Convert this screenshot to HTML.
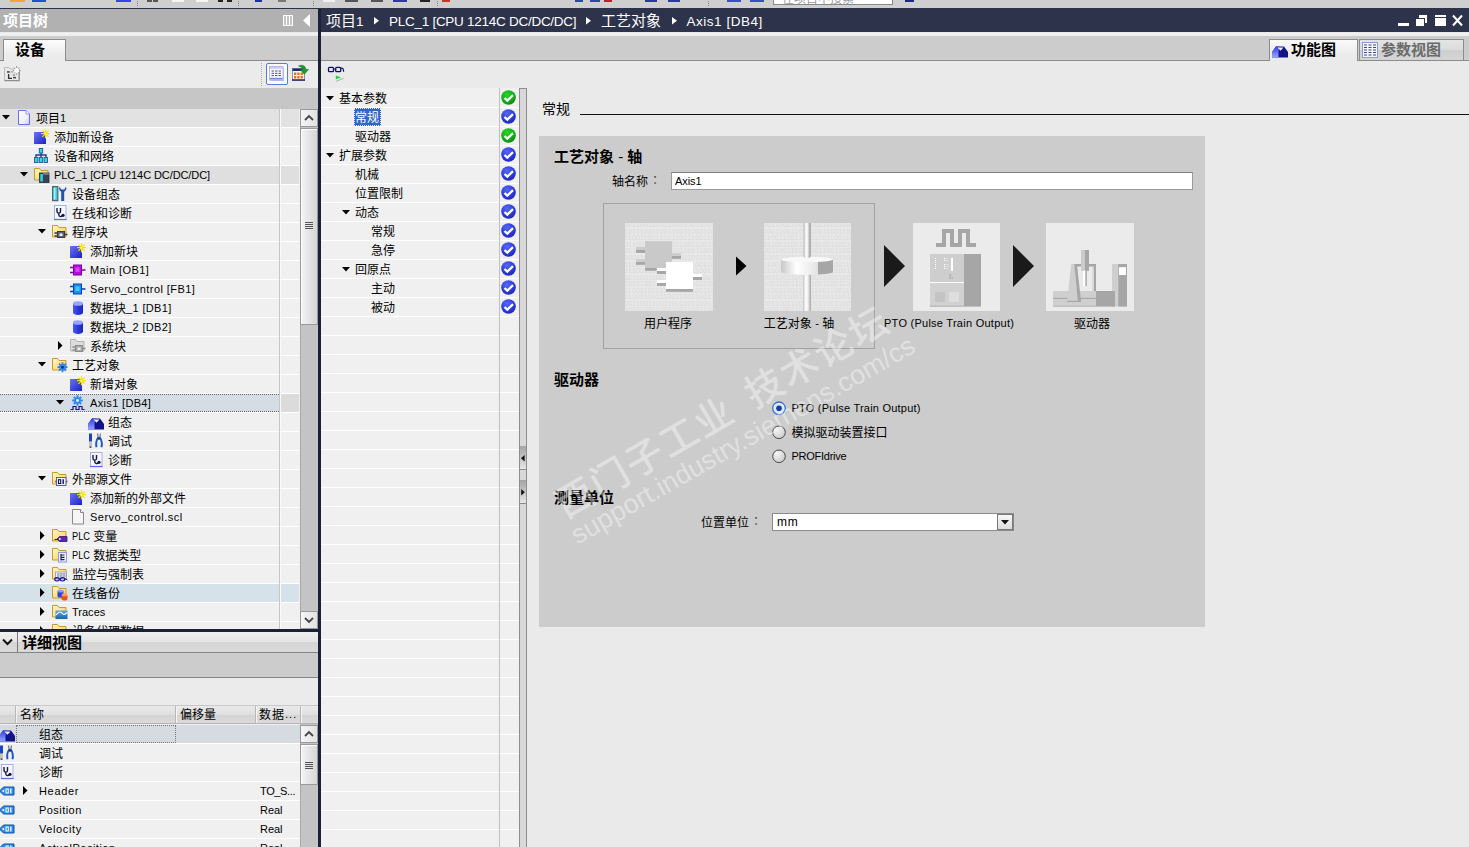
<!DOCTYPE html>
<html lang="zh"><head><meta charset="utf-8"><title>TIA Portal - Axis1</title>
<style>
*{box-sizing:border-box;margin:0;padding:0}
html,body{width:1469px;height:847px;overflow:hidden}
body{position:relative;background:#eaeaea;font-family:"Liberation Sans","Noto Sans CJK SC",sans-serif;font-size:12px;line-height:1;color:#000}
.a{position:absolute}
.t{position:absolute;white-space:nowrap;font-size:12px;line-height:18px;height:18px}
.b{font-weight:bold}
.row{position:absolute;left:0;height:19px;border-bottom:1px solid #fff;background:#f0f0f0}
svg{position:absolute;overflow:visible}
.l{font-size:11px;position:relative;top:-1px}
.tc{position:relative;left:4px;top:-2px;color:#355}
</style></head><body>

<svg width="0" height="0" style="position:absolute"><defs><linearGradient id="gf" x1="0" y1="0" x2="1" y2="1"><stop offset="0" stop-color="#fff6d0"/><stop offset=".55" stop-color="#ffe088"/><stop offset="1" stop-color="#f8c860"/></linearGradient><linearGradient id="gdoc" x1="0" y1="0" x2="1" y2="1"><stop offset="0" stop-color="#ffffff"/><stop offset=".6" stop-color="#f0f0ff"/><stop offset="1" stop-color="#c8ccf8"/></linearGradient><linearGradient id="gblue" x1="0" y1="0" x2="1" y2="1"><stop offset="0" stop-color="#6a74f4"/><stop offset="1" stop-color="#1c20c8"/></linearGradient><linearGradient id="gblue2" x1="0" y1="0" x2="0" y2="1"><stop offset="0" stop-color="#3040e0"/><stop offset="1" stop-color="#98a4ff"/></linearGradient><linearGradient id="gcyl" x1="0" y1="0" x2="1" y2="0"><stop offset="0" stop-color="#4858f4"/><stop offset=".5" stop-color="#2c38e0"/><stop offset="1" stop-color="#1c24b4"/></linearGradient><linearGradient id="gtr" x1="0" y1="0" x2="0" y2="1"><stop offset="0" stop-color="#58a8e8"/><stop offset="1" stop-color="#1c64a8"/></linearGradient><radialGradient id="ggreen" cx=".4" cy=".3" r=".8"><stop offset="0" stop-color="#28d428"/><stop offset=".6" stop-color="#0cac14"/><stop offset="1" stop-color="#0c7c10"/></radialGradient><radialGradient id="gchkb" cx=".4" cy=".3" r=".8"><stop offset="0" stop-color="#5868f8"/><stop offset=".6" stop-color="#2c38dc"/><stop offset="1" stop-color="#1c24a8"/></radialGradient><radialGradient id="grad" cx=".35" cy=".3" r=".9"><stop offset="0" stop-color="#f4f4f4"/><stop offset="1" stop-color="#c4c4c4"/></radialGradient></defs></svg>
<div class="a" style="left:0px;top:0px;width:1469px;height:8px;background:#cfcfcf"></div>
<div class="a" style="left:10px;top:0px;width:15px;height:2px;background:#e8a83a"></div>
<div class="a" style="left:32px;top:0px;width:14px;height:2px;background:#1c55c8"></div>
<div class="a" style="left:116px;top:0px;width:15px;height:2px;background:#3a45e0"></div>
<div class="a" style="left:147px;top:0px;width:5px;height:2px;background:#555"></div>
<div class="a" style="left:153px;top:0px;width:5px;height:2px;background:#555"></div>
<div class="a" style="left:172px;top:0px;width:12px;height:2px;background:#f4f4f4"></div>
<div class="a" style="left:196px;top:0px;width:12px;height:2px;background:#f4f4f4"></div>
<div class="a" style="left:218px;top:0px;width:5px;height:2px;background:#222"></div>
<div class="a" style="left:227px;top:0px;width:5px;height:2px;background:#222"></div>
<div class="a" style="left:255px;top:0px;width:7px;height:2px;background:#1a2fb0"></div>
<div class="a" style="left:278px;top:0px;width:8px;height:2px;background:#777"></div>
<div class="a" style="left:323px;top:0px;width:12px;height:2px;background:#f0f0f0"></div>
<div class="a" style="left:345px;top:0px;width:13px;height:2px;background:#555"></div>
<div class="a" style="left:371px;top:0px;width:12px;height:2px;background:#555"></div>
<div class="a" style="left:393px;top:0px;width:14px;height:2px;background:#2c3c9c"></div>
<div class="a" style="left:420px;top:0px;width:10px;height:2px;background:#222"></div>
<div class="a" style="left:442px;top:0px;width:8px;height:2px;background:#d03020"></div>
<div class="a" style="left:575px;top:0px;width:8px;height:2px;background:#2a4a9a"></div>
<div class="a" style="left:590px;top:0px;width:10px;height:2px;background:#2a4a9a"></div>
<div class="a" style="left:604px;top:0px;width:8px;height:2px;background:#c02020"></div>
<div class="a" style="left:645px;top:0px;width:12px;height:2px;background:#2a3a9a"></div>
<div class="a" style="left:668px;top:0px;width:12px;height:2px;background:#2a3a9a"></div>
<div class="a" style="left:727px;top:0px;width:14px;height:2px;background:#3a50c0"></div>
<div class="a" style="left:750px;top:0px;width:14px;height:2px;background:#3a50c0"></div>
<div class="a" style="left:905px;top:0px;width:9px;height:2px;background:#1a2a80"></div>
<div class="a" style="left:137px;top:1px;width:1px;height:6px;background:repeating-linear-gradient(#888 0 1px,transparent 1px 2px)"></div>
<div class="a" style="left:238px;top:1px;width:1px;height:6px;background:repeating-linear-gradient(#888 0 1px,transparent 1px 2px)"></div>
<div class="a" style="left:313px;top:1px;width:1px;height:6px;background:repeating-linear-gradient(#888 0 1px,transparent 1px 2px)"></div>
<div class="a" style="left:437px;top:1px;width:1px;height:6px;background:repeating-linear-gradient(#888 0 1px,transparent 1px 2px)"></div>
<div class="a" style="left:708px;top:1px;width:1px;height:6px;background:repeating-linear-gradient(#888 0 1px,transparent 1px 2px)"></div>
<div class="a" style="left:773px;top:0;width:120px;height:5px;background:#fff;border:1px solid #888;border-top:none;overflow:hidden"><div class="t" style="left:8px;top:-10px;color:#9a9a9a;font-size:12px">在项目中搜索</div></div>
<div class="a" style="left:0px;top:8px;width:321px;height:1px;background:#2d334b"></div>
<div class="a" style="left:0px;top:9px;width:318px;height:23px;background:#b1b1b1"></div>
<div class="t" style="left:3px;top:11px;font-size:15px;font-weight:bold;color:#fff;line-height:20px;height:20px">项目树</div>
<svg style="left:283px;top:15px" width="10" height="11"><rect x="0.5" y="0.5" width="9" height="10" fill="#c4c4c4" stroke="#fff"/><path d="M3.5 1v9M6.5 1v9" stroke="#fff"/></svg>
<svg style="left:303px;top:14px" width="8" height="13"><polygon points="7,0 7,13 0,6.5" fill="#fff"/></svg>
<div class="a" style="left:0px;top:32px;width:318px;height:4px;background:linear-gradient(#e6e6e6,#f2f2f2 40%,#ececec)"></div>
<div class="a" style="left:0px;top:36px;width:318px;height:25px;background:#cccccc;border-bottom:1px solid #8c8c8c"></div>
<div class="a" style="left:3px;top:39px;width:63px;height:22px;background:linear-gradient(#fdfdfd,#ebebeb 75%);border:1px solid #8c8c8c;border-bottom:none"></div>
<div class="t" style="left:15px;top:40px;font-size:15px;font-weight:bold;line-height:20px;height:20px">设备</div>
<div class="a" style="left:0px;top:61px;width:318px;height:27px;background:#ebebeb"></div>
<svg style="left:4px;top:66px" width="16" height="16" viewBox="0 0 16 16"><path d="M0.500 1.500h4.500l1.500 1.500h8.500v11.500h-14.500z" fill="#e9e9e9" stroke="#bcbcbc" stroke-width="1"/><path d="M0.500 14.700h14.700v-11.200" fill="none" stroke="#8e8e8e" stroke-width="1.200"/><rect x="3" y="5.200" width="2.800" height="1.500" fill="#444"/><rect x="6.800" y="5.400" width="2.200" height="1" fill="#888"/><path d="M4.600 8v4.400h3.400" fill="none" stroke="#333" stroke-width="1.300"/><rect x="9" y="10.900" width="3" height="1.500" fill="#444"/><rect x="8.800" y="8.600" width="2.400" height="1" fill="#777"/><circle cx="12.700" cy="4.600" r="2.600" fill="#fbfbfb"/><path d="M12.700 0v2M12.700 7.200v1.600M8.800 4.600h1.600M15 4.600h1.600M9.800 1.600l1.300 1.300M15.600 1.600l-1.300 1.300M9.900 7.500l1.200-1.200M15.500 7.500l-1.200-1.200" stroke="#7c7c7c" stroke-width=".8"/></svg>
<div class="a" style="left:261px;top:63px;width:1px;height:24px;background:repeating-linear-gradient(#aaa 0 1px,transparent 1px 2px)"></div>
<div class="a" style="left:266px;top:63px;width:22px;height:22px;background:#fbfbfb;border:1px solid #4f7fd8;border-radius:2px"></div>
<svg style="left:269px;top:66px" width="16" height="16" viewBox="0 0 16 16"><rect x="1.500" y="1.500" width="13.500" height="13.500" fill="#b8b8c4"/><rect x="0.500" y="0.500" width="13.500" height="13.500" fill="#fbfbff" stroke="#b4b8ec" stroke-width="1"/><rect x="1" y="1" width="12.500" height="1.800" fill="#c8ccf4"/><path d="M2.500 5h2.500M6 5h2.500M9.500 5h2.500M2.500 7.300h2.500M6 7.300h2.500M9.500 7.300h2.500M2.500 9.600h2.500M6 9.600h2.500M9.500 9.600h2.500" stroke="#4c5064" stroke-width="1"/><rect x="1" y="11.800" width="12.500" height="1.700" fill="#7a88ec"/></svg>
<svg style="left:292px;top:65px" width="16" height="16" viewBox="0 0 16 16"><rect x="0.500" y="3.500" width="12" height="11.500" fill="#fafafa" stroke="#8890b8" stroke-width="1"/><rect x="0.500" y="3.500" width="12" height="2.500" fill="#1c2c6c"/><rect x="0" y="14.300" width="13" height="1.500" fill="#1c2c6c"/><g fill="#e86c10"><rect x="2" y="7.500" width="2.300" height="2.500"/><rect x="5.300" y="7.500" width="2.300" height="2.500"/><rect x="8.600" y="7.500" width="2.300" height="2.500"/><rect x="2" y="11" width="2.300" height="2.500"/><rect x="5.300" y="11" width="2.300" height="2.500"/><rect x="8.600" y="11" width="2.300" height="2.500"/></g><path d="M6.500 1c3.500-1.800 7-.5 7.500 3.500h2.500l-4.200 4.800l-4.200-4.800h2.600c-.3-1.700-1.700-2.700-4.200-3.500z" fill="#1c9c2c" stroke="#0c6c1c" stroke-width=".5"/></svg>
<div class="a" style="left:0px;top:88px;width:318px;height:21px;background:#c6c6c6"></div>
<div class="a" style="left:0;top:109px;width:318px;height:520px;overflow:hidden;background:#f0f0f0">
<div class="row" style="top:0px;width:299px;background:#e2e2e2;"></div>
<svg style="left:2px;top:6px" width="8" height="5"><polygon points="0,0 8,0 4,4.5" fill="#000"/></svg>
<svg style="left:16px;top:1px" width="16" height="16" viewBox="0 0 16 16"><g transform="translate(2 0)"><path d="M0.5 0.5h7.500l3.500 3.500v10.500h-11z" fill="url(#gdoc)" stroke="#6272e4" stroke-width="1"/><path d="M8 0.5v3.500h3.500" fill="#fff" stroke="#8a96ec" stroke-width="1"/></g></svg>
<div class="t" style="left:36px;top:1px;">项目<span class="l">1</span></div>
<div class="row" style="top:19px;width:299px;"></div>
<svg style="left:34px;top:20px" width="16" height="16" viewBox="0 0 16 16"><rect x="0" y="3" width="12" height="12" fill="url(#gblue)"/><g stroke="#f2e000" stroke-width="1.2"><path d="M11.5 0.2v9M7 4.7h9M8.4 1.6l6.200 6.200M14.600 1.600l-6.200 6.200"/></g><circle cx="11.5" cy="4.700" r=".9" fill="#fffbc0"/></svg>
<div class="t" style="left:54px;top:20px;">添加新设备</div>
<div class="row" style="top:38px;width:299px;"></div>
<svg style="left:34px;top:39px" width="16" height="16" viewBox="0 0 16 16"><path d="M7 4v3M2 9V7h10v2M7 7v2" stroke="#223a8c" stroke-width="1.4" fill="none"/><rect x="5.3" y="0.5" width="3.4" height="4.5" fill="#36d6e0" stroke="#1a5a9a" stroke-width=".9"/><rect x="0.5" y="9.5" width="3.4" height="5" fill="#36d6e0" stroke="#1a5a9a" stroke-width=".9"/><rect x="5.3" y="9.5" width="3.4" height="5" fill="#36d6e0" stroke="#1a5a9a" stroke-width=".9"/><rect x="10.1" y="9.5" width="3.4" height="5" fill="#36d6e0" stroke="#1a5a9a" stroke-width=".9"/></svg>
<div class="t" style="left:54px;top:39px;">设备和网络</div>
<div class="row" style="top:57px;width:299px;background:#dfdfdf;"></div>
<svg style="left:20px;top:63px" width="8" height="5"><polygon points="0,0 8,0 4,4.5" fill="#000"/></svg>
<svg style="left:34px;top:58px" width="16" height="16" viewBox="0 0 16 16"><path d="M0.5 1.5h5l1.5 2h7v9.5h-13.5z" fill="url(#gf)" stroke="#c89a2c" stroke-width="1"/><rect x="5.5" y="6" width="9.5" height="9.5" fill="#3a4256" stroke="#272c3c" stroke-width=".8"/><rect x="6.3" y="7" width="2.6" height="7.5" fill="#30d0dc"/><rect x="9.2" y="6.2" width="5.6" height="1.4" fill="#8a92a8"/></svg>
<div class="t" style="left:54px;top:58px;"><span class="l" style="letter-spacing:-0.09px;">PLC_1 [CPU 1214C DC/DC/DC]</span></div>
<div class="row" style="top:76px;width:299px;"></div>
<svg style="left:52px;top:77px" width="16" height="16" viewBox="0 0 16 16"><rect x="0.6" y="0.6" width="5.2" height="14" fill="#30d4dc" stroke="#5a6070" stroke-width="1.2"/><rect x="1.8" y="1.8" width="1.6" height="11.6" fill="#a8f4f6"/><path d="M7.600 0.800c-1 1.800-.4 4 1.600 4.900V15h3V5.700c2-.9 2.800-3.100 1.800-4.900l-1.700 2.700h-3z" fill="#1c54b4"/></svg>
<div class="t" style="left:72px;top:77px;">设备组态</div>
<div class="row" style="top:95px;width:299px;"></div>
<svg style="left:52px;top:96px" width="16" height="16" viewBox="0 0 16 16"><g transform="translate(2 0)"><rect x="0.500" y="0.500" width="11.500" height="14" fill="#f6f7ff" stroke="#a4b0f0" stroke-width="1"/><path d="M0 14.500h12.500" stroke="#5a6ae8" stroke-width="1.200"/><path d="M3 3v3.500c0 2.200 3.500 2.200 3.500 0V3M4.750 8v1.500c0 2.400 2.800 2.600 3.600 1.200" fill="none" stroke="#14183c" stroke-width="1.400"/><circle cx="9" cy="10.300" r="1.600" fill="#14183c"/></g></svg>
<div class="t" style="left:72px;top:96px;">在线和诊断</div>
<div class="row" style="top:114px;width:299px;"></div>
<svg style="left:38px;top:120px" width="8" height="5"><polygon points="0,0 8,0 4,4.5" fill="#000"/></svg>
<svg style="left:52px;top:115px" width="16" height="16" viewBox="0 0 16 16"><path d="M0.5 1.5h5l1.5 2h7v9.5h-13.5z" fill="url(#gf)" stroke="#c89a2c" stroke-width="1"/><rect x="5.500" y="7.500" width="7" height="6" fill="#5a6274" stroke="#343a4c" stroke-width="1"/><rect x="7.500" y="9.500" width="3" height="2.500" fill="#f0f0f0"/><path d="M2.500 9h3M2.500 12h3M12.500 10.500h3" stroke="#343a4c" stroke-width="1.400"/></svg>
<div class="t" style="left:72px;top:115px;">程序块</div>
<div class="row" style="top:133px;width:299px;"></div>
<svg style="left:70px;top:134px" width="16" height="16" viewBox="0 0 16 16"><rect x="0" y="3" width="12" height="12" fill="url(#gblue)"/><g stroke="#f2e000" stroke-width="1.2"><path d="M11.5 0.2v9M7 4.7h9M8.4 1.6l6.200 6.200M14.600 1.600l-6.200 6.200"/></g><circle cx="11.5" cy="4.700" r=".9" fill="#fffbc0"/></svg>
<div class="t" style="left:90px;top:134px;">添加新块</div>
<div class="row" style="top:152px;width:299px;"></div>
<svg style="left:70px;top:153px" width="16" height="16" viewBox="0 0 16 16"><rect x="3.500" y="3" width="8" height="10" fill="#b010d8" stroke="#7a089c" stroke-width="1"/><rect x="5.500" y="5.500" width="4" height="4.500" fill="#e040ff"/><path d="M0 5.500h3.500M0 10.500h3.500M11.500 8h4" stroke="#7a089c" stroke-width="1.600"/></svg>
<div class="t" style="left:90px;top:153px;"><span class="l" style="letter-spacing:0.42px;">Main [OB1]</span></div>
<div class="row" style="top:171px;width:299px;"></div>
<svg style="left:70px;top:172px" width="16" height="16" viewBox="0 0 16 16"><rect x="3.500" y="3" width="8" height="10" fill="#1494ec" stroke="#0c3cb4" stroke-width="1"/><rect x="5.500" y="5.500" width="4" height="4.500" fill="#48c8f8"/><path d="M0 5.500h3.500M0 10.500h3.500M11.500 8h4" stroke="#0c3cb4" stroke-width="1.600"/></svg>
<div class="t" style="left:90px;top:172px;"><span class="l" style="letter-spacing:0.42px;">Servo_control [FB1]</span></div>
<div class="row" style="top:190px;width:299px;"></div>
<svg style="left:70px;top:191px" width="16" height="16" viewBox="0 0 16 16"><path d="M3 3.500v9c0 1.400 2.200 2.500 5 2.500s5-1.100 5-2.500v-9z" fill="url(#gcyl)"/><ellipse cx="8" cy="3.500" rx="5" ry="2.300" fill="#98a4ff"/></svg>
<div class="t" style="left:90px;top:191px;">数据块<span class="l" style="letter-spacing:0.36px;">_1 [DB1]</span></div>
<div class="row" style="top:209px;width:299px;"></div>
<svg style="left:70px;top:210px" width="16" height="16" viewBox="0 0 16 16"><path d="M3 3.500v9c0 1.400 2.200 2.500 5 2.500s5-1.100 5-2.500v-9z" fill="url(#gcyl)"/><ellipse cx="8" cy="3.500" rx="5" ry="2.300" fill="#98a4ff"/></svg>
<div class="t" style="left:90px;top:210px;">数据块<span class="l" style="letter-spacing:0.36px;">_2 [DB2]</span></div>
<div class="row" style="top:228px;width:299px;"></div>
<svg style="left:58px;top:232px" width="5" height="9"><polygon points="0,0 4.5,4.5 0,9" fill="#000"/></svg>
<svg style="left:70px;top:229px" width="16" height="16" viewBox="0 0 16 16"><path d="M0.500 1.500h5l1.500 2h7v9.500h-13.500z" fill="#dcdcdc" stroke="#b4b4b4" stroke-width="1"/><rect x="5.500" y="7.500" width="7" height="6" fill="#a8a8a8" stroke="#8c8c8c" stroke-width="1"/><rect x="7.500" y="9.500" width="3" height="2.500" fill="#f0f0f0"/><path d="M2.500 9h3M2.500 12h3M12.500 10.500h3" stroke="#8c8c8c" stroke-width="1.400"/></svg>
<div class="t" style="left:90px;top:229px;">系统块</div>
<div class="row" style="top:247px;width:299px;"></div>
<svg style="left:38px;top:253px" width="8" height="5"><polygon points="0,0 8,0 4,4.5" fill="#000"/></svg>
<svg style="left:52px;top:248px" width="16" height="16" viewBox="0 0 16 16"><path d="M0.5 1.5h5l1.5 2h7v9.5h-13.5z" fill="url(#gf)" stroke="#c89a2c" stroke-width="1"/><g transform="translate(10.500 10.200)"><g stroke="#2a84f0" stroke-width="1.800"><path d="M0 -5v10M-5 0h10M-3.500 -3.500l7 7M3.500 -3.500l-7 7"/></g><circle r="3.100" fill="#2a84f0"/><circle r="1.300" fill="#14285c"/></g></svg>
<div class="t" style="left:72px;top:248px;">工艺对象</div>
<div class="row" style="top:266px;width:299px;"></div>
<svg style="left:70px;top:267px" width="16" height="16" viewBox="0 0 16 16"><rect x="0" y="3" width="12" height="12" fill="url(#gblue)"/><g stroke="#f2e000" stroke-width="1.2"><path d="M11.5 0.2v9M7 4.7h9M8.4 1.6l6.200 6.200M14.600 1.600l-6.200 6.200"/></g><circle cx="11.5" cy="4.700" r=".9" fill="#fffbc0"/></svg>
<div class="t" style="left:90px;top:267px;">新增对象</div>
<div class="row" style="top:285px;width:299px;background:#dbdbdb;"></div>
<div class="a" style="left:-1px;top:285px;width:282px;height:18px;background:#d5dce3;border:1px dotted #6a6a6a"></div>
<svg style="left:56px;top:291px" width="8" height="5"><polygon points="0,0 8,0 4,4.5" fill="#000"/></svg>
<svg style="left:70px;top:286px" width="16" height="16" viewBox="0 0 16 16"><g transform="translate(7.500 5.500)"><g stroke="#2a8af4" stroke-width="1.900"><path d="M0 -5.300v10.600M-5.300 0h10.600M-3.700 -3.700l7.400 7.400M3.700 -3.700l-7.400 7.400"/></g><circle r="3.300" fill="#2a8af4"/><circle r="1.400" fill="#f0f0f0"/></g><path d="M0.500 14.500h2.500v-3h3v3h3v-3h3v3h2.500" fill="none" stroke="#14148c" stroke-width="1.200"/></svg>
<div class="t" style="left:90px;top:286px;"><span class="l" style="letter-spacing:0.34px;">Axis1 [DB4]</span></div>
<div class="row" style="top:304px;width:299px;"></div>
<svg style="left:88px;top:305px" width="16" height="16" viewBox="0 0 16 16"><path d="M0 15.500V10L4 4.500h8l4 5.500v5.500z" fill="#12128c"/><path d="M0 15.500V10L4 4.500h3.500L6.500 10v5.500z" fill="url(#gblue2)"/><path d="M5.500 5.600h6l-3 3.200z" fill="#eef0ff"/></svg>
<div class="t" style="left:108px;top:305px;">组态</div>
<div class="row" style="top:323px;width:299px;"></div>
<svg style="left:88px;top:324px" width="16" height="16" viewBox="0 0 16 16"><rect x="1" y="0.500" width="3" height="8" fill="#1c44c4"/><rect x="1.800" y="8.500" width="1.400" height="5" fill="#d0d0d8" stroke="#888" stroke-width=".5"/><rect x="1.500" y="13.500" width="2" height="1.300" fill="#333"/><path d="M9.500 0.500l.8 4.500M12.500 0.500l-.8 4.500" stroke="#707a90" stroke-width="1.300"/><path d="M10.200 4.500c-1.800 2.500-2.500 6-1.700 9.700M11.800 4.500c1.800 2.500 2.500 6 1.700 9.700" fill="none" stroke="#1c54d0" stroke-width="1.900"/><circle cx="11" cy="5.500" r="1.200" fill="#14286c"/></svg>
<div class="t" style="left:108px;top:324px;">调试</div>
<div class="row" style="top:342px;width:299px;"></div>
<svg style="left:88px;top:343px" width="16" height="16" viewBox="0 0 16 16"><g transform="translate(2 0)"><rect x="0.500" y="0.500" width="11.500" height="14" fill="#f6f7ff" stroke="#a4b0f0" stroke-width="1"/><path d="M0 14.500h12.500" stroke="#5a6ae8" stroke-width="1.200"/><path d="M3 3v3.500c0 2.200 3.500 2.200 3.500 0V3M4.750 8v1.500c0 2.400 2.800 2.600 3.600 1.200" fill="none" stroke="#14183c" stroke-width="1.400"/><circle cx="9" cy="10.300" r="1.600" fill="#14183c"/></g></svg>
<div class="t" style="left:108px;top:343px;">诊断</div>
<div class="row" style="top:361px;width:299px;"></div>
<svg style="left:38px;top:367px" width="8" height="5"><polygon points="0,0 8,0 4,4.5" fill="#000"/></svg>
<svg style="left:52px;top:362px" width="16" height="16" viewBox="0 0 16 16"><path d="M0.5 1.5h5l1.5 2h7v9.5h-13.5z" fill="url(#gf)" stroke="#c89a2c" stroke-width="1"/><rect x="4.500" y="6.500" width="9.500" height="8" fill="#f0f2ff" stroke="#5a6488" stroke-width="1"/><path d="M3 10.500h1.500M14 10.500h1.500" stroke="#5a6488" stroke-width="1.400"/><rect x="6.500" y="8.700" width="2.200" height="3.800" fill="none" stroke="#14145c" stroke-width="1.100"/><path d="M11.200 8.200v4.800" stroke="#14145c" stroke-width="1.400"/></svg>
<div class="t" style="left:72px;top:362px;">外部源文件</div>
<div class="row" style="top:380px;width:299px;"></div>
<svg style="left:70px;top:381px" width="16" height="16" viewBox="0 0 16 16"><rect x="0" y="3" width="12" height="12" fill="url(#gblue)"/><g stroke="#f2e000" stroke-width="1.2"><path d="M11.5 0.2v9M7 4.7h9M8.4 1.6l6.200 6.200M14.600 1.600l-6.200 6.200"/></g><circle cx="11.5" cy="4.700" r=".9" fill="#fffbc0"/></svg>
<div class="t" style="left:90px;top:381px;">添加新的外部文件</div>
<div class="row" style="top:399px;width:299px;"></div>
<svg style="left:70px;top:400px" width="16" height="16" viewBox="0 0 16 16"><g transform="translate(1 0)"><path d="M1.5 0.5h8l3 3v11.5h-11z" fill="#f6f6f8" stroke="#8a8a8a" stroke-width="1"/><path d="M9.5 0.5v3h3" fill="#fff" stroke="#8a8a8a" stroke-width="1"/></g></svg>
<div class="t" style="left:90px;top:400px;"><span class="l" style="letter-spacing:0.49px;">Servo_control.scl</span></div>
<div class="row" style="top:418px;width:299px;"></div>
<svg style="left:40px;top:422px" width="5" height="9"><polygon points="0,0 4.5,4.5 0,9" fill="#000"/></svg>
<svg style="left:52px;top:419px" width="16" height="16" viewBox="0 0 16 16"><path d="M0.5 1.5h5l1.5 2h7v9.5h-13.5z" fill="url(#gf)" stroke="#c89a2c" stroke-width="1"/><path d="M5 11l2.500-2.500h7.500v5h-7.500z" fill="#5a28b4" stroke="#341474" stroke-width=".8"/><circle cx="7.800" cy="11" r=".9" fill="#fff"/><path d="M2.500 11.500h3" stroke="#341474" stroke-width="1"/></svg>
<div class="t" style="left:72px;top:419px;"><span class="l" style="display:inline-block;transform:scaleX(.84);transform-origin:0 50%;margin-right:-3.4px">PLC</span> 变量</div>
<div class="row" style="top:437px;width:299px;"></div>
<svg style="left:40px;top:441px" width="5" height="9"><polygon points="0,0 4.5,4.5 0,9" fill="#000"/></svg>
<svg style="left:52px;top:438px" width="16" height="16" viewBox="0 0 16 16"><path d="M0.5 1.5h5l1.5 2h7v9.5h-13.5z" fill="url(#gf)" stroke="#c89a2c" stroke-width="1"/><rect x="6.500" y="5.500" width="8" height="9.500" fill="#f2f4ff" stroke="#8a98e8" stroke-width="1"/><path d="M9 7v6.500M9 8h3.500M9 10.300h3.500M9 12.600h3.500" stroke="#1c2048" stroke-width="1.200" fill="none"/></svg>
<div class="t" style="left:72px;top:438px;"><span class="l" style="display:inline-block;transform:scaleX(.84);transform-origin:0 50%;margin-right:-3.4px">PLC</span> 数据类型</div>
<div class="row" style="top:456px;width:299px;"></div>
<svg style="left:40px;top:460px" width="5" height="9"><polygon points="0,0 4.5,4.5 0,9" fill="#000"/></svg>
<svg style="left:52px;top:457px" width="16" height="16" viewBox="0 0 16 16"><path d="M0.5 1.5h5l1.5 2h7v9.5h-13.5z" fill="url(#gf)" stroke="#c89a2c" stroke-width="1"/><rect x="3.500" y="6" width="11" height="6.500" fill="#eef0fa" stroke="#9098b8" stroke-width=".8"/><path d="M5 8h2.500M8 8h2.500M11 8h2.500M5 10h2.500M8 10h2.500M11 10h2.500" stroke="#6a7290" stroke-width="1"/><ellipse cx="5" cy="13.300" rx="2.300" ry="1.700" fill="none" stroke="#14148c" stroke-width="1.100"/><ellipse cx="10.500" cy="13.300" rx="2.300" ry="1.700" fill="none" stroke="#14148c" stroke-width="1.100"/><path d="M7.300 13h1M12.800 12.800l2.500 1" stroke="#14148c" stroke-width="1"/></svg>
<div class="t" style="left:72px;top:457px;">监控与强制表</div>
<div class="row" style="top:475px;width:299px;background:#d5e2ea;"></div>
<svg style="left:40px;top:479px" width="5" height="9"><polygon points="0,0 4.5,4.5 0,9" fill="#000"/></svg>
<svg style="left:52px;top:476px" width="16" height="16" viewBox="0 0 16 16"><path d="M0.5 1.5h5l1.5 2h7v9.5h-13.5z" fill="url(#gf)" stroke="#c89a2c" stroke-width="1"/><path d="M5.500 6v5c0 .9 1.400 1.600 3 1.600s3-.7 3-1.600V6z" fill="#2c3ce0"/><ellipse cx="8.500" cy="6" rx="3" ry="1.500" fill="#8c98ff"/><path d="M9.500 10v4c0 .9 1.300 1.500 3 1.500s3-.6 3-1.500v-4z" fill="#f05010"/><ellipse cx="12.500" cy="10" rx="3" ry="1.400" fill="#ff9c60"/></svg>
<div class="t" style="left:72px;top:476px;">在线备份</div>
<div class="row" style="top:494px;width:299px;"></div>
<svg style="left:40px;top:498px" width="5" height="9"><polygon points="0,0 4.5,4.5 0,9" fill="#000"/></svg>
<svg style="left:52px;top:495px" width="16" height="16" viewBox="0 0 16 16"><path d="M0.5 1.5h5l1.5 2h7v9.5h-13.5z" fill="url(#gf)" stroke="#c89a2c" stroke-width="1"/><rect x="3.500" y="6.500" width="12" height="8.500" fill="url(#gtr)"/><path d="M3.500 11c2-.5 2.500-3 4.500-3s2.500 2.500 4 2.500s2-1.500 3.500-2" fill="none" stroke="#fff" stroke-width="1.200"/></svg>
<div class="t" style="left:72px;top:495px;"><span class="l" style="letter-spacing:0.01px;">Traces</span></div>
<div class="row" style="top:513px;width:299px;"></div>
<svg style="left:40px;top:517px" width="5" height="9"><polygon points="0,0 4.5,4.5 0,9" fill="#000"/></svg>
<svg style="left:52px;top:514px" width="16" height="16" viewBox="0 0 16 16"><path d="M0.5 1.5h5l1.5 2h7v9.5h-13.5z" fill="url(#gf)" stroke="#c89a2c" stroke-width="1"/><rect x="4.500" y="6.500" width="9" height="8" fill="#444c64"/><path d="M6 8.500v4M8.500 8.500v4M11 8.500v4" stroke="#fff" stroke-width="1"/></svg>
<div class="t" style="left:72px;top:514px;">设备代理数据</div>
<div class="a" style="left:279px;top:0px;width:1px;height:520px;background:#c6c6c6"></div>
<div class="a" style="left:280px;top:0px;width:1px;height:520px;background:#fafafa"></div>
<div class="a" style="left:299px;top:0px;width:19px;height:520px;background:#f0f0f0"></div>
<div class="a" style="left:300px;top:0px;width:18px;height:520px;background:#c4c4c4;border-left:1px solid #a8a8a8"></div>
<div class="a" style="left:300px;top:0px;width:18px;height:18px;background:linear-gradient(90deg,#f6f6f6,#e2e2e2);border:1px solid #9a9a9a"></div>
<svg style="left:304px;top:5px" width="10" height="7"><path d="M1 6L5 2L9 6" fill="none" stroke="#444" stroke-width="1.8"/></svg>
<div class="a" style="left:300px;top:19px;width:18px;height:197px;background:linear-gradient(90deg,#f4f4f4,#d6d6d6);border:1px solid #9a9a9a;box-shadow:inset 1px 1px 0 #fff"></div>
<svg style="left:305px;top:113px" width="8" height="8"><path d="M0 0.5h8M0 2.5h8M0 4.5h8M0 6.5h8" stroke="#555"/></svg>
<div class="a" style="left:300px;top:502px;width:18px;height:18px;background:linear-gradient(90deg,#f6f6f6,#e2e2e2);border:1px solid #9a9a9a"></div>
<svg style="left:304px;top:508px" width="10" height="7"><path d="M1 1L5 5L9 1" fill="none" stroke="#444" stroke-width="1.8"/></svg>
</div>
<div class="a" style="left:0px;top:629px;width:318px;height:3px;background:#1b2237"></div>
<div class="a" style="left:0px;top:632px;width:318px;height:21px;background:linear-gradient(#f0f0f0,#e4e4e4 50%,#d6d6d6 52%,#d9d9d9);border-bottom:1px solid #858585"></div>
<svg style="left:2px;top:638px" width="11" height="8"><path d="M1 1.5L5.5 6L10 1.5" fill="none" stroke="#111" stroke-width="2"/></svg>
<div class="a" style="left:17px;top:632px;width:1px;height:20px;background:#7a7a7a"></div>
<div class="t" style="left:22px;top:633px;font-size:15px;font-weight:bold;line-height:20px;height:20px">详细视图</div>
<div class="a" style="left:0px;top:653px;width:318px;height:25px;background:#cccccc;border-bottom:1px solid #858585"></div>
<div class="a" style="left:0px;top:678px;width:318px;height:27px;background:#ebebeb"></div>
<div class="a" style="left:0px;top:705px;width:318px;height:19px;background:linear-gradient(#eaeaea,#e0e0e0 50%,#d4d4d4 52%,#dadada);border-top:1px solid #c8c8c8;border-bottom:1px solid #b4b4b4"></div>
<div class="a" style="left:15px;top:706px;width:1px;height:17px;background:#b8b8b8"></div>
<div class="a" style="left:16px;top:706px;width:1px;height:17px;background:#f4f4f4"></div>
<div class="a" style="left:175px;top:706px;width:1px;height:17px;background:#b8b8b8"></div>
<div class="a" style="left:176px;top:706px;width:1px;height:17px;background:#f4f4f4"></div>
<div class="a" style="left:255px;top:706px;width:1px;height:17px;background:#b8b8b8"></div>
<div class="a" style="left:256px;top:706px;width:1px;height:17px;background:#f4f4f4"></div>
<div class="a" style="left:300px;top:706px;width:1px;height:17px;background:#b8b8b8"></div>
<div class="a" style="left:301px;top:706px;width:1px;height:17px;background:#f4f4f4"></div>
<div class="t" style="left:20px;top:706px;">名称</div>
<div class="t" style="left:180px;top:706px;">偏移量</div>
<div class="t" style="left:259px;top:706px;letter-spacing:1px">数据<span class="l">...</span></div>
<div class="a" style="left:0;top:724px;width:318px;height:123px;overflow:hidden;background:#f0f0f0">
<div class="row" style="top:1px;width:300px;background:#d5dbe1;"></div>
<div class="a" style="left:16px;top:1px;width:160px;height:18px;border:1px dotted #777"></div>
<svg style="left:-1px;top:2px" width="16" height="16" viewBox="0 0 16 16"><path d="M0 15.500V10L4 4.500h8l4 5.500v5.500z" fill="#12128c"/><path d="M0 15.500V10L4 4.500h3.500L6.500 10v5.500z" fill="url(#gblue2)"/><path d="M5.500 5.600h6l-3 3.200z" fill="#eef0ff"/></svg>
<div class="t" style="left:39px;top:2px;">组态</div>
<div class="row" style="top:20px;width:300px;"></div>
<svg style="left:-1px;top:21px" width="16" height="16" viewBox="0 0 16 16"><rect x="1" y="0.500" width="3" height="8" fill="#1c44c4"/><rect x="1.800" y="8.500" width="1.400" height="5" fill="#d0d0d8" stroke="#888" stroke-width=".5"/><rect x="1.500" y="13.500" width="2" height="1.300" fill="#333"/><path d="M9.500 0.500l.8 4.500M12.500 0.500l-.8 4.500" stroke="#707a90" stroke-width="1.300"/><path d="M10.200 4.500c-1.800 2.500-2.500 6-1.700 9.700M11.800 4.500c1.800 2.500 2.500 6 1.700 9.700" fill="none" stroke="#1c54d0" stroke-width="1.900"/><circle cx="11" cy="5.500" r="1.200" fill="#14286c"/></svg>
<div class="t" style="left:39px;top:21px;">调试</div>
<div class="row" style="top:39px;width:300px;"></div>
<svg style="left:-1px;top:40px" width="16" height="16" viewBox="0 0 16 16"><g transform="translate(2 0)"><rect x="0.500" y="0.500" width="11.500" height="14" fill="#f6f7ff" stroke="#a4b0f0" stroke-width="1"/><path d="M0 14.500h12.500" stroke="#5a6ae8" stroke-width="1.200"/><path d="M3 3v3.500c0 2.200 3.500 2.200 3.500 0V3M4.750 8v1.500c0 2.400 2.800 2.600 3.600 1.200" fill="none" stroke="#14183c" stroke-width="1.400"/><circle cx="9" cy="10.300" r="1.600" fill="#14183c"/></g></svg>
<div class="t" style="left:39px;top:40px;">诊断</div>
<div class="row" style="top:58px;width:300px;"></div>
<svg style="left:-1px;top:59px" width="16" height="16" viewBox="0 0 16 16"><path d="M0.500 8l4-4h10.500v8h-10.500z" fill="#2c8ce8" stroke="#1450a8" stroke-width="1"/><circle cx="4.300" cy="8" r="1" fill="#fff"/><rect x="7" y="6" width="2.300" height="4" fill="none" stroke="#fff" stroke-width="1"/><path d="M11.800 5.500v5" stroke="#fff" stroke-width="1.300"/></svg>
<svg style="left:23px;top:62px" width="5" height="9"><polygon points="0,0 4.5,4.5 0,9" fill="#000"/></svg>
<div class="t" style="left:39px;top:59px;"><span class="l" style="letter-spacing:0.66px;">Header</span></div>
<div class="t" style="left:260px;top:59px;"><span class="l" style="letter-spacing:-0.37px;">TO_S...</span></div>
<div class="row" style="top:77px;width:300px;"></div>
<svg style="left:-1px;top:78px" width="16" height="16" viewBox="0 0 16 16"><path d="M0.500 8l4-4h10.500v8h-10.500z" fill="#2c8ce8" stroke="#1450a8" stroke-width="1"/><circle cx="4.300" cy="8" r="1" fill="#fff"/><rect x="7" y="6" width="2.300" height="4" fill="none" stroke="#fff" stroke-width="1"/><path d="M11.800 5.500v5" stroke="#fff" stroke-width="1.300"/></svg>
<div class="t" style="left:39px;top:78px;"><span class="l" style="letter-spacing:0.45px;">Position</span></div>
<div class="t" style="left:260px;top:78px;"><span class="l" style="letter-spacing:-0.06px;">Real</span></div>
<div class="row" style="top:96px;width:300px;"></div>
<svg style="left:-1px;top:97px" width="16" height="16" viewBox="0 0 16 16"><path d="M0.500 8l4-4h10.500v8h-10.500z" fill="#2c8ce8" stroke="#1450a8" stroke-width="1"/><circle cx="4.300" cy="8" r="1" fill="#fff"/><rect x="7" y="6" width="2.300" height="4" fill="none" stroke="#fff" stroke-width="1"/><path d="M11.800 5.500v5" stroke="#fff" stroke-width="1.300"/></svg>
<div class="t" style="left:39px;top:97px;"><span class="l" style="letter-spacing:0.61px;">Velocity</span></div>
<div class="t" style="left:260px;top:97px;"><span class="l" style="letter-spacing:-0.06px;">Real</span></div>
<div class="row" style="top:115px;width:300px;"></div>
<svg style="left:-1px;top:116px" width="16" height="16" viewBox="0 0 16 16"><path d="M0.500 8l4-4h10.500v8h-10.500z" fill="#2c8ce8" stroke="#1450a8" stroke-width="1"/><circle cx="4.300" cy="8" r="1" fill="#fff"/><rect x="7" y="6" width="2.300" height="4" fill="none" stroke="#fff" stroke-width="1"/><path d="M11.800 5.500v5" stroke="#fff" stroke-width="1.300"/></svg>
<div class="t" style="left:39px;top:116px;"><span class="l" style="letter-spacing:0.49px;">ActualPosition</span></div>
<div class="t" style="left:260px;top:116px;"><span class="l" style="letter-spacing:-0.06px;">Real</span></div>
<div class="a" style="left:300px;top:0px;width:18px;height:123px;background:#c4c4c4;border-left:1px solid #a8a8a8"></div>
<div class="a" style="left:300px;top:1px;width:18px;height:18px;background:linear-gradient(90deg,#f6f6f6,#e2e2e2);border:1px solid #9a9a9a"></div>
<svg style="left:304px;top:6px" width="10" height="7"><path d="M1 6L5 2L9 6" fill="none" stroke="#444" stroke-width="1.8"/></svg>
<div class="a" style="left:300px;top:20px;width:18px;height:41px;background:linear-gradient(90deg,#f4f4f4,#d6d6d6);border:1px solid #9a9a9a;box-shadow:inset 1px 1px 0 #fff"></div>
<svg style="left:305px;top:38px" width="8" height="8"><path d="M0 0.5h8M0 2.5h8M0 4.5h8M0 6.5h8" stroke="#555"/></svg>
</div>
<div class="a" style="left:318px;top:9px;width:3px;height:838px;background:#1b2237"></div>
<div class="a" style="left:321px;top:8px;width:1148px;height:24px;background:#2d334b"></div>
<div class="t" style="left:326px;top:11px;font-size:15px;line-height:20px;height:20px;color:#fff">项目<span class="l" style="font-size:13.5px;top:0px;">1</span></div>
<div class="t" style="left:389px;top:11px;font-size:15px;line-height:20px;height:20px;color:#fff"><span class="l" style="letter-spacing:-0.27px;font-size:13.5px;top:0px;">PLC_1 [CPU 1214C DC/DC/DC]</span></div>
<div class="t" style="left:601px;top:11px;font-size:15px;line-height:20px;height:20px;color:#fff">工艺对象</div>
<div class="t" style="left:686.5px;top:11px;font-size:15px;line-height:20px;height:20px;color:#fff"><span class="l" style="letter-spacing:0.52px;font-size:13.5px;top:0px;">Axis1 [DB4]</span></div>
<svg style="left:374px;top:17px" width="5" height="8"><polygon points="0,0 5,3.800 0,7.600" fill="#fff"/></svg>
<svg style="left:586px;top:17px" width="5" height="8"><polygon points="0,0 5,3.800 0,7.600" fill="#fff"/></svg>
<svg style="left:672px;top:17px" width="5" height="8"><polygon points="0,0 5,3.800 0,7.600" fill="#fff"/></svg>
<div class="a" style="left:1398px;top:23px;width:11px;height:3px;background:#fff"></div>
<svg style="left:1416px;top:15px" width="11" height="11"><path d="M3 0h8v8h-2v-5h-6z" fill="#fff"/><rect x="0" y="4" width="8" height="7" fill="#fff"/></svg>
<svg style="left:1435px;top:15px" width="11" height="11"><rect x="0" y="0" width="11" height="2" fill="#fff"/><rect x="0" y="3" width="11" height="8" fill="#fff"/></svg>
<svg style="left:1452px;top:15px" width="11" height="11"><path d="M1 0.5L10 10.5M10 0.5L1 10.5" stroke="#fff" stroke-width="2"/></svg>
<div class="a" style="left:321px;top:32px;width:1148px;height:4px;background:linear-gradient(#e6e6e6,#f2f2f2 40%,#ececec)"></div>
<div class="a" style="left:321px;top:36px;width:1148px;height:25px;background:#cccccc;border-bottom:1px solid #8c8c8c"></div>
<div class="a" style="left:1269px;top:39px;width:89px;height:22px;background:linear-gradient(#fafafa,#ebebeb 70%);border:1px solid #8c8c8c;border-bottom:none"></div>
<svg style="left:1272px;top:42px" width="16" height="16" viewBox="0 0 16 16"><path d="M0 15.500V10L4 4.500h8l4 5.500v5.500z" fill="#12128c"/><path d="M0 15.500V10L4 4.500h3.500L6.500 10v5.500z" fill="url(#gblue2)"/><path d="M5.500 5.600h6l-3 3.200z" fill="#eef0ff"/></svg>
<div class="t" style="left:1291px;top:40px;font-size:15px;font-weight:bold;line-height:20px;height:20px">功能图</div>
<div class="a" style="left:1359px;top:39px;width:105px;height:21px;background:linear-gradient(#e4e4e4,#dcdcdc 50%,#cfcfcf 52%,#d4d4d4);border:1px solid #8c8c8c;border-bottom:none"></div>
<svg style="left:1362px;top:42px" width="16" height="16" viewBox="0 0 16 16"><rect x="0.500" y="0.500" width="15" height="15" fill="#f4f6ff" stroke="#8a98e8" stroke-width="1"/><path d="M2 3h3M6.500 3h3M11 3h3M2 5.500h3M6.500 5.500h3M11 5.500h3M2 8h3M6.500 8h3M11 8h3M2 10.500h3M6.500 10.500h3M11 10.500h3M2 13h3M6.500 13h3M11 13h3" stroke="#444a70" stroke-width="1.100"/></svg>
<div class="t" style="left:1381px;top:40px;font-size:15px;font-weight:bold;line-height:20px;height:20px;color:#6a6a6a">参数视图</div>
<div class="a" style="left:321px;top:61px;width:1148px;height:786px;background:#eaeaea"></div>
<svg style="left:327px;top:65px" width="16" height="16" viewBox="0 0 16 16"><rect x="1.500" y="2.400" width="5" height="4.200" rx=".9" fill="#e4e4e4" stroke="#10106c" stroke-width="1.300"/><rect x="8.700" y="2.400" width="5" height="4.200" rx=".9" fill="#e4e4e4" stroke="#10106c" stroke-width="1.300"/><path d="M6.500 4h2.200M13.700 3.200c2-.6 2.900 .6 2.900 3.600" fill="none" stroke="#10106c" stroke-width="1.200"/><path d="M8.800 10.600l5.400 1.900l-5.400 1.800z" fill="#20d040"/><path d="M9.200 16.300l7.300-3" stroke="#a0a4b4" stroke-width=".9"/></svg>
<div class="a" style="left:321px;top:88px;width:198px;height:759px;overflow:hidden;background:#f0f0f0">
<div class="row" style="top:1px;width:198px"></div>
<div class="row" style="top:20px;width:198px"></div>
<div class="row" style="top:39px;width:198px"></div>
<div class="row" style="top:58px;width:198px"></div>
<div class="row" style="top:77px;width:198px"></div>
<div class="row" style="top:96px;width:198px"></div>
<div class="row" style="top:115px;width:198px"></div>
<div class="row" style="top:134px;width:198px"></div>
<div class="row" style="top:153px;width:198px"></div>
<div class="row" style="top:172px;width:198px"></div>
<div class="row" style="top:191px;width:198px"></div>
<div class="row" style="top:210px;width:198px"></div>
<div class="row" style="top:229px;width:198px"></div>
<div class="row" style="top:248px;width:198px"></div>
<div class="row" style="top:267px;width:198px"></div>
<div class="row" style="top:286px;width:198px"></div>
<div class="row" style="top:305px;width:198px"></div>
<div class="row" style="top:324px;width:198px"></div>
<div class="row" style="top:343px;width:198px"></div>
<div class="row" style="top:362px;width:198px"></div>
<div class="row" style="top:381px;width:198px"></div>
<div class="row" style="top:400px;width:198px"></div>
<div class="row" style="top:419px;width:198px"></div>
<div class="row" style="top:438px;width:198px"></div>
<div class="row" style="top:457px;width:198px"></div>
<div class="row" style="top:476px;width:198px"></div>
<div class="row" style="top:495px;width:198px"></div>
<div class="row" style="top:514px;width:198px"></div>
<div class="row" style="top:533px;width:198px"></div>
<div class="row" style="top:552px;width:198px"></div>
<div class="row" style="top:571px;width:198px"></div>
<div class="row" style="top:590px;width:198px"></div>
<div class="row" style="top:609px;width:198px"></div>
<div class="row" style="top:628px;width:198px"></div>
<div class="row" style="top:647px;width:198px"></div>
<div class="row" style="top:666px;width:198px"></div>
<div class="row" style="top:685px;width:198px"></div>
<div class="row" style="top:704px;width:198px"></div>
<div class="row" style="top:723px;width:198px"></div>
<div class="row" style="top:742px;width:198px"></div>
<div class="a" style="left:178px;top:0px;width:1px;height:759px;background:#c0c0c0"></div>
<svg style="left:5px;top:8px" width="8" height="5"><polygon points="0,0 8,0 4,4.5" fill="#000"/></svg>
<div class="t" style="left:18px;top:2px;">基本参数</div>
<svg style="left:180px;top:2px" width="16" height="16" viewBox="0 0 16 16"><circle cx="7.500" cy="7.500" r="7.300" fill="url(#ggreen)"/><path d="M3.500 8l2.800 2.700l5.700-5.500" fill="none" stroke="#fff" stroke-width="2.300"/></svg>
<div class="a" style="left:33px;top:20px;width:27px;height:18px;background:#3165c8;border:1px dotted #dfe8ff"></div>
<div class="t" style="left:34px;top:21px;color:#fff">常规</div>
<svg style="left:180px;top:21px" width="16" height="16" viewBox="0 0 16 16"><circle cx="7.500" cy="7.500" r="7.300" fill="url(#gchkb)"/><path d="M3.500 8l2.800 2.700l5.700-5.500" fill="none" stroke="#fff" stroke-width="2.300"/></svg>
<div class="t" style="left:34px;top:40px;">驱动器</div>
<svg style="left:180px;top:40px" width="16" height="16" viewBox="0 0 16 16"><circle cx="7.500" cy="7.500" r="7.300" fill="url(#ggreen)"/><path d="M3.500 8l2.800 2.700l5.700-5.500" fill="none" stroke="#fff" stroke-width="2.300"/></svg>
<svg style="left:5px;top:65px" width="8" height="5"><polygon points="0,0 8,0 4,4.5" fill="#000"/></svg>
<div class="t" style="left:18px;top:59px;">扩展参数</div>
<svg style="left:180px;top:59px" width="16" height="16" viewBox="0 0 16 16"><circle cx="7.500" cy="7.500" r="7.300" fill="url(#gchkb)"/><path d="M3.500 8l2.800 2.700l5.700-5.500" fill="none" stroke="#fff" stroke-width="2.300"/></svg>
<div class="t" style="left:34px;top:78px;">机械</div>
<svg style="left:180px;top:78px" width="16" height="16" viewBox="0 0 16 16"><circle cx="7.500" cy="7.500" r="7.300" fill="url(#gchkb)"/><path d="M3.500 8l2.800 2.700l5.700-5.500" fill="none" stroke="#fff" stroke-width="2.300"/></svg>
<div class="t" style="left:34px;top:97px;">位置限制</div>
<svg style="left:180px;top:97px" width="16" height="16" viewBox="0 0 16 16"><circle cx="7.500" cy="7.500" r="7.300" fill="url(#gchkb)"/><path d="M3.500 8l2.800 2.700l5.700-5.500" fill="none" stroke="#fff" stroke-width="2.300"/></svg>
<svg style="left:21px;top:122px" width="8" height="5"><polygon points="0,0 8,0 4,4.5" fill="#000"/></svg>
<div class="t" style="left:34px;top:116px;">动态</div>
<svg style="left:180px;top:116px" width="16" height="16" viewBox="0 0 16 16"><circle cx="7.500" cy="7.500" r="7.300" fill="url(#gchkb)"/><path d="M3.500 8l2.800 2.700l5.700-5.500" fill="none" stroke="#fff" stroke-width="2.300"/></svg>
<div class="t" style="left:50px;top:135px;">常规</div>
<svg style="left:180px;top:135px" width="16" height="16" viewBox="0 0 16 16"><circle cx="7.500" cy="7.500" r="7.300" fill="url(#gchkb)"/><path d="M3.500 8l2.800 2.700l5.700-5.500" fill="none" stroke="#fff" stroke-width="2.300"/></svg>
<div class="t" style="left:50px;top:154px;">急停</div>
<svg style="left:180px;top:154px" width="16" height="16" viewBox="0 0 16 16"><circle cx="7.500" cy="7.500" r="7.300" fill="url(#gchkb)"/><path d="M3.500 8l2.800 2.700l5.700-5.500" fill="none" stroke="#fff" stroke-width="2.300"/></svg>
<svg style="left:21px;top:179px" width="8" height="5"><polygon points="0,0 8,0 4,4.5" fill="#000"/></svg>
<div class="t" style="left:34px;top:173px;">回原点</div>
<svg style="left:180px;top:173px" width="16" height="16" viewBox="0 0 16 16"><circle cx="7.500" cy="7.500" r="7.300" fill="url(#gchkb)"/><path d="M3.500 8l2.800 2.700l5.700-5.500" fill="none" stroke="#fff" stroke-width="2.300"/></svg>
<div class="t" style="left:50px;top:192px;">主动</div>
<svg style="left:180px;top:192px" width="16" height="16" viewBox="0 0 16 16"><circle cx="7.500" cy="7.500" r="7.300" fill="url(#gchkb)"/><path d="M3.500 8l2.800 2.700l5.700-5.500" fill="none" stroke="#fff" stroke-width="2.300"/></svg>
<div class="t" style="left:50px;top:211px;">被动</div>
<svg style="left:180px;top:211px" width="16" height="16" viewBox="0 0 16 16"><circle cx="7.500" cy="7.500" r="7.300" fill="url(#gchkb)"/><path d="M3.500 8l2.800 2.700l5.700-5.500" fill="none" stroke="#fff" stroke-width="2.300"/></svg>
</div>
<div class="a" style="left:519px;top:88px;width:8px;height:759px;background:#d9d9d9;border:1px solid #8e8e8e;border-bottom:none"></div>
<div class="a" style="left:520px;top:446px;width:6px;height:24px;background:linear-gradient(#a4a4a4,#e6e6e6);border-bottom:1px solid #8a8a8a"></div>
<div class="a" style="left:520px;top:480px;width:6px;height:24px;background:linear-gradient(#a4a4a4,#e6e6e6);border-bottom:1px solid #8a8a8a"></div>
<svg style="left:521px;top:455px" width="4" height="7"><polygon points="3.6,0 3.6,6.500 0,3.250" fill="#111"/></svg>
<svg style="left:521px;top:489px" width="4" height="7"><polygon points="0.2,0 0.2,6.500 3.800,3.250" fill="#111"/></svg>
<div class="t" style="left:542px;top:99px;font-size:14px;line-height:20px;height:20px">常规</div>
<div class="a" style="left:580px;top:114px;width:889px;height:1px;background:#111"></div>
<div class="a" style="left:539px;top:136px;width:666px;height:491px;background:#cccccc"></div>
<div class="t" style="left:554px;top:147px;font-size:15px;font-weight:bold;line-height:20px;height:20px">工艺对象 <span style="font-weight:normal">-</span> 轴</div>
<div class="t" style="left:612px;top:173px;">轴名称<span class="tc">：</span></div>
<div class="a" style="left:671px;top:172px;width:522px;height:18px;background:#fff;border:1px solid #9a9a9a;border-top-color:#7c7c7c"></div>
<div class="t" style="left:675px;top:173px;"><span class="l" style="letter-spacing:-0.07px;">Axis1</span></div>
<div class="a" style="left:603px;top:203px;width:272px;height:146px;border:1px solid #a2a2a2"></div>
<svg style="left:600px;top:200px" width="560" height="150" viewBox="600 200 560 150">
<defs><clipPath id="c1"><rect x="625" y="223" width="88" height="88"/></clipPath><clipPath id="c2"><rect x="764" y="223" width="87" height="88"/></clipPath><linearGradient id="shaft" x1="0" y1="0" x2="1" y2="0"><stop offset="0" stop-color="#c4c4c4"/><stop offset=".35" stop-color="#ffffff"/><stop offset=".6" stop-color="#f0f0f0"/><stop offset="1" stop-color="#a4a4a4"/></linearGradient><linearGradient id="disc" x1="0" y1="0" x2="1" y2="0"><stop offset="0" stop-color="#c8c8c8"/><stop offset=".3" stop-color="#ffffff"/><stop offset=".7" stop-color="#e4e4e4"/><stop offset=".72" stop-color="#a6a6a6"/><stop offset="1" stop-color="#a6a6a6"/></linearGradient></defs>
<rect x="625" y="223" width="88" height="88" fill="#e8e8e8"/>
<g clip-path="url(#c1)"><g font-family="Liberation Sans, sans-serif" font-size="7.3" letter-spacing="0.03" fill="#dbdbdb"><text x="624" y="227.2">00110011001100110011001</text><text x="624" y="233.8">10011001100110011001100</text><text x="624" y="240.3">11001100110011001100110</text><text x="624" y="246.8">01100110011001100110011</text><text x="624" y="253.4">00110011001100110011001</text><text x="624" y="259.9">10011001100110011001100</text><text x="624" y="266.5">11001100110011001100110</text><text x="624" y="273.1">01100110011001100110011</text><text x="624" y="279.6">00110011001100110011001</text><text x="624" y="286.1">10011001100110011001100</text><text x="624" y="292.7">11001100110011001100110</text><text x="624" y="299.2">01100110011001100110011</text><text x="624" y="305.8">00110011001100110011001</text><text x="624" y="312.3">10011001100110011001100</text><text x="624" y="318.9">11001100110011001100110</text></g></g>
<rect x="645" y="241.200" width="27" height="26.800" fill="#c9c9c9"/>
<rect x="645" y="268" width="11.700" height="2.800" fill="#a6a6a6"/>
<rect x="636" y="247" width="9" height="2.800" fill="#cdcdcd"/><rect x="636" y="249.800" width="9" height="3.100" fill="#a6a6a6"/>
<rect x="636" y="259.200" width="9" height="2.800" fill="#cdcdcd"/><rect x="636" y="262" width="9" height="2.800" fill="#a6a6a6"/>
<rect x="672" y="253.100" width="9" height="2.900" fill="#cdcdcd"/><rect x="672" y="256" width="9" height="2.800" fill="#a6a6a6"/>
<rect x="666" y="262" width="27" height="27" fill="#ffffff"/>
<rect x="666" y="289" width="27" height="2.800" fill="#a6a6a6"/>
<rect x="657" y="268.200" width="9" height="2.800" fill="#fff"/><rect x="657" y="271" width="9" height="3" fill="#a6a6a6"/>
<rect x="657" y="280" width="9" height="3" fill="#fff"/><rect x="657" y="283" width="9" height="2.900" fill="#a6a6a6"/>
<rect x="693" y="274" width="9" height="3" fill="#fff"/><rect x="693" y="277" width="9" height="3" fill="#a6a6a6"/>
<polygon points="736,256.5 746.5,266 736,275.5" fill="#000"/>
<rect x="764" y="223" width="87" height="88" fill="#e8e8e8"/>
<g clip-path="url(#c2)"><g font-family="Liberation Sans, sans-serif" font-size="7.3" letter-spacing="0.03" fill="#dbdbdb"><text x="763" y="227.2">00110011001100110011001</text><text x="763" y="233.8">10011001100110011001100</text><text x="763" y="240.3">11001100110011001100110</text><text x="763" y="246.8">01100110011001100110011</text><text x="763" y="253.4">00110011001100110011001</text><text x="763" y="259.9">10011001100110011001100</text><text x="763" y="266.5">11001100110011001100110</text><text x="763" y="273.1">01100110011001100110011</text><text x="763" y="279.6">00110011001100110011001</text><text x="763" y="286.1">10011001100110011001100</text><text x="763" y="292.7">11001100110011001100110</text><text x="763" y="299.2">01100110011001100110011</text><text x="763" y="305.8">00110011001100110011001</text><text x="763" y="312.3">10011001100110011001100</text><text x="763" y="318.9">11001100110011001100110</text></g></g>
<rect x="803" y="223" width="8" height="88" fill="url(#shaft)"/>
<path d="M781 259.500v12.500a26 2.800 0 0 0 52 0v-12.500z" fill="url(#disc)"/>
<ellipse cx="807" cy="259.500" rx="26" ry="2.800" fill="#f8f8f8"/>
<rect x="804" y="223" width="6" height="35" fill="url(#shaft)"/>
<polygon points="884,245 905,266 884,287" fill="#1a1a1a"/>
<rect x="913" y="223" width="87" height="88" fill="#ebebeb"/>
<path d="M936 245h8v-14h8v14h8v-14h8v14h8" fill="none" stroke="#a6a6a6" stroke-width="4"/>
<rect x="930" y="254" width="34" height="52.600" fill="#cecece"/>
<rect x="964" y="254" width="17" height="52.600" fill="#a6a6a6"/>
<rect x="930" y="282" width="34" height="1.300" fill="#fafafa"/>
<rect x="930" y="283.300" width="34" height="23.300" fill="#d1d1d1"/>
<rect x="930" y="305.600" width="34" height="1" fill="#b4b4b4"/>
<rect x="935" y="292" width="10" height="10" fill="#c4c4c4"/><rect x="949" y="292" width="10" height="10" fill="#dedede"/>
<rect x="935" y="258" width="1" height="1" fill="#fff"/>
<rect x="935" y="260" width="1" height="1" fill="#fff"/>
<rect x="935" y="262" width="1" height="1" fill="#fff"/>
<rect x="935" y="264" width="1" height="1" fill="#fff"/>
<rect x="935" y="266" width="1" height="1" fill="#fff"/>
<rect x="935" y="268" width="1" height="1" fill="#fff"/>
<rect x="944" y="258" width="1" height="1" fill="#fff"/><rect x="945" y="258" width="4" height="1" fill="#dcdcdc"/>
<rect x="944" y="260" width="1" height="1" fill="#fff"/><rect x="945" y="260" width="4" height="1" fill="#dcdcdc"/>
<rect x="944" y="264" width="1" height="1" fill="#fff"/><rect x="945" y="264" width="4" height="1" fill="#dcdcdc"/>
<rect x="944" y="266" width="1" height="1" fill="#fff"/><rect x="945" y="266" width="4" height="1" fill="#dcdcdc"/>
<rect x="944" y="268" width="1" height="1" fill="#fff"/><rect x="945" y="268" width="4" height="1" fill="#dcdcdc"/>
<rect x="951" y="258" width="2" height="13" fill="#fff"/>
<rect x="949.200" y="274" width="2" height="5" fill="#b6b6b6"/><rect x="952" y="277" width="1" height="2" fill="#b6b6b6"/>
<polygon points="1013,245 1034,266 1013,287" fill="#1a1a1a"/>
<rect x="1046" y="223" width="88" height="88" fill="#ebebeb"/>
<rect x="1053" y="291" width="43" height="15.600" fill="#cfcfcf"/>
<rect x="1053" y="297.800" width="43" height="1.200" fill="#a9a9a9"/>
<rect x="1053" y="305.800" width="43" height=".8" fill="#b4b4b4"/>
<rect x="1112" y="264" width="6.200" height="42.600" fill="#cfcfcf"/>
<rect x="1096" y="291" width="19" height="15.600" fill="#a6a6a6"/>
<rect x="1118.200" y="264" width="8.800" height="42.600" fill="#a6a6a6"/>
<rect x="1119" y="267.200" width="7" height="7.800" fill="#ffffff"/>
<rect x="1092.200" y="266" width="2" height="25" fill="#d6d6d6"/>
<polygon points="1071.200,264 1074.500,264 1078,301 1067.200,301" fill="#cfcfcf"/>
<polygon points="1074.300,264 1096,264 1096,291 1094,291 1094,266.600 1077.200,266.600 1081,300.700 1081,302 1067.200,302 1067.200,300.700 1077.800,300.700" fill="#a6a6a6"/>
<rect x="1081" y="250" width="4" height="20.800" fill="#cbcbcb"/><rect x="1085" y="250" width="4" height="20.800" fill="#a6a6a6"/>
<rect x="1083" y="270.800" width="2.400" height="15.200" fill="#ffffff"/><rect x="1085.400" y="270.800" width="1.400" height="15.200" fill="#a6a6a6"/>
</svg>
<div class="t" style="left:668px;top:315px;transform:translateX(-50%)">用户程序</div>
<div class="t" style="left:799px;top:315px;transform:translateX(-50%)">工艺对象 <span class="l">-</span> 轴</div>
<div class="t" style="left:884px;top:315px;"><span class="l" style="letter-spacing:0.26px;">PTO (Pulse Train Output)</span></div>
<div class="t" style="left:1092px;top:315px;transform:translateX(-50%)">驱动器</div>
<div class="t" style="left:554px;top:370px;font-size:15px;font-weight:bold;line-height:20px;height:20px">驱动器</div>
<svg style="left:772px;top:401px" width="14" height="14"><circle cx="7" cy="7.3" r="6.3" fill="#eef4ff" stroke="#3b6fd0" stroke-width="1.3"/><circle cx="7" cy="7.3" r="4.6" fill="#d8e6ff"/><circle cx="7" cy="7.3" r="2.800" fill="#1c3c9c"/></svg>
<div class="t" style="left:791.5px;top:400px;"><span class="l" style="letter-spacing:0.22px;">PTO (Pulse Train Output)</span></div>
<svg style="left:772px;top:425px" width="14" height="14"><circle cx="7" cy="7.3" r="6.3" fill="url(#grad)" stroke="#4a4a4a" stroke-width="1"/></svg>
<div class="t" style="left:791.5px;top:424px;">模拟驱动装置接口</div>
<svg style="left:772px;top:449px" width="14" height="14"><circle cx="7" cy="7.3" r="6.3" fill="url(#grad)" stroke="#4a4a4a" stroke-width="1"/></svg>
<div class="t" style="left:791.5px;top:448px;"><span class="l" style="letter-spacing:-0.26px;">PROFIdrive</span></div>
<div class="t" style="left:554px;top:488px;font-size:15px;font-weight:bold;line-height:20px;height:20px">测量单位</div>
<div class="t" style="left:701px;top:514px;">位置单位<span class="tc">：</span></div>
<div class="a" style="left:772px;top:513px;width:242px;height:18px;background:#fff;border:1px solid #8a8a8a"></div>
<div class="t" style="left:777px;top:514px;"><span class="l" style="letter-spacing:0.67px;font-size:12px;">mm</span></div>
<div class="a" style="left:997px;top:514px;width:16px;height:16px;background:linear-gradient(#f8f8f8,#dcdcdc);border:1px solid #777"></div>
<svg style="left:1001px;top:520px" width="8" height="5"><polygon points="0,0 8,0 4,4.5" fill="#111"/></svg>
<div class="a" style="left:0;top:0;width:0;height:0;opacity:.4;color:#fff"><div class="a" style="left:559px;top:483px;white-space:nowrap;font-size:38px;font-weight:500;line-height:50px;height:50px;letter-spacing:2px;transform-origin:0 50%;transform:rotate(-30.2deg)">西门子工业<span style="display:inline-block;width:19px"></span>技术论坛</div><div class="a" style="left:573px;top:517px;white-space:nowrap;font-size:27px;line-height:40px;height:40px;transform-origin:0 50%;transform:rotate(-29.7deg)">support.industry.siemens.com/cs</div></div>
</body></html>
